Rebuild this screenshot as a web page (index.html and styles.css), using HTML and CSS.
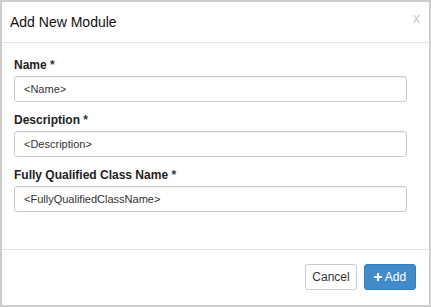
FILE: index.html
```html
<!DOCTYPE html>
<html>
<head>
  <meta charset="UTF-8">
  <title>Add New Module</title>
  <link rel="stylesheet" href="styles.css">
</head>
<body>
  <div class="modal">
    <div class="modal-header">
      <h4 class="modal-title">Add New Module</h4>
      <span class="close">X</span>
    </div>

    <div class="modal-body">
      <div class="form-group">
        <label>Name <span class="req">*</span></label>
        <input type="text" class="form-control" value="&lt;Name&gt;">
      </div>
      <div class="form-group">
        <label>Description <span class="req">*</span></label>
        <input type="text" class="form-control" value="&lt;Description&gt;">
      </div>
      <div class="form-group">
        <label>Fully Qualified Class Name <span class="req">*</span></label>
        <input type="text" class="form-control" value="&lt;FullyQualifiedClassName&gt;">
      </div>
    </div>

    <div class="modal-footer">
      <button class="btn btn-default">Cancel</button>
      <button class="btn btn-primary">
        <svg width="8" height="8" viewBox="0 0 8 8">
          <path d="M3 0h2v3h3v2h-3v3h-2v-3h-3v-2h3z" fill="#fff"></path>
        </svg>
        Add
      </button>
    </div>
  </div>
</body>
</html>
```

FILE: styles.css
```css
html, body {
  margin: 0;
  padding: 0;
}
body {
  font-family: "Liberation Sans", Arial, sans-serif;
  color: #333;
  background: #fff;
}
.modal {
  width: 431px;
  height: 307px;
  box-sizing: border-box;
  border: 2px solid #cdcdcd;
  display: flex;
  flex-direction: column;
}
.modal-header {
  height: 40px;
  border-bottom: 1px solid #e5e5e5;
  display: flex;
  align-items: center;
  justify-content: space-between;
  padding: 0 9px 0 8px;
}
.modal-title {
  margin: 0;
  font-size: 14px;
  font-weight: normal;
  color: #111;
}
.close {
  font-size: 11px;
  color: #c4c4c4;
  margin-top: -6px;
}
.modal-body {
  flex: 1;
  padding: 14px 22px 0 12px;
}
.form-group {
  margin-bottom: 10px;
}
.form-group label {
  display: block;
  font-size: 12px;
  line-height: 16px;
  font-weight: bold;
  color: #222;
  margin-bottom: 3px;
}
.req {
  color: #333;
}
.form-control {
  display: block;
  width: 100%;
  height: 26px;
  box-sizing: border-box;
  border: 1px solid #ccc;
  border-radius: 3px;
  padding: 0 9px;
  font-family: "Liberation Sans", Arial, sans-serif;
  font-size: 11px;
  color: #333;
  box-shadow: inset 0 1px 1px rgba(0, 0, 0, 0.06);
  outline: none;
}
.modal-footer {
  border-top: 1px solid #e5e5e5;
  display: flex;
  justify-content: flex-end;
  gap: 7px;
  padding: 14px 13px 15px 0;
}
.btn {
  height: 26px;
  width: 52px;
  box-sizing: border-box;
  border-radius: 3px;
  font-family: "Liberation Sans", Arial, sans-serif;
  font-size: 12px;
  padding: 0;
  cursor: pointer;
}
.btn-default {
  background: #fff;
  border: 1px solid #ccc;
  color: #333;
}
.btn-primary {
  background: #428bca;
  border: 1px solid #357ebd;
  color: #fff;
  display: flex;
  align-items: center;
  justify-content: center;
  gap: 3px;
}
```
